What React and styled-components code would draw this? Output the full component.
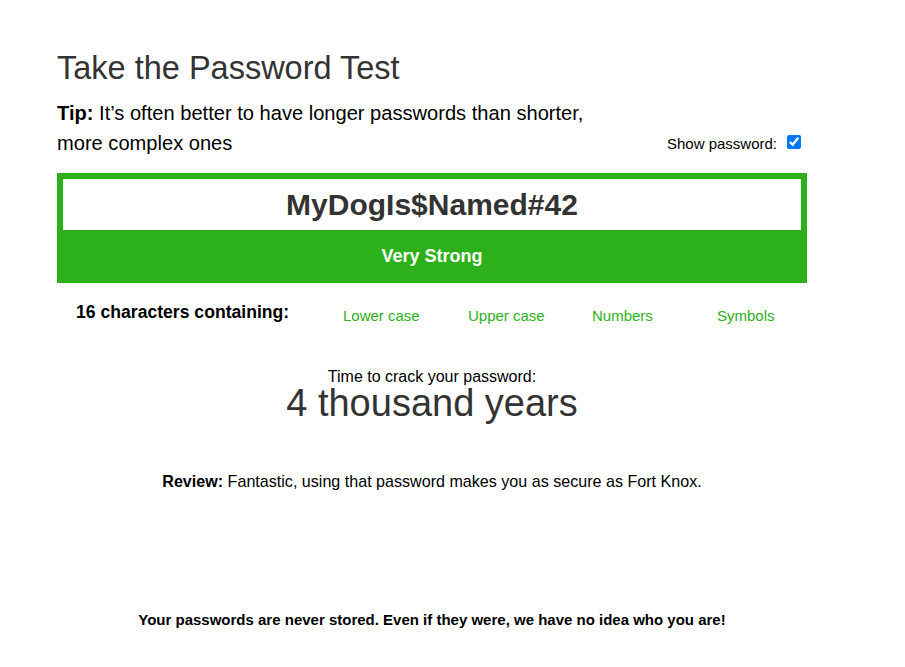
import React, { useState } from 'react';
import styled, { createGlobalStyle } from 'styled-components';

const GREEN = '#2db11b';

const GlobalStyle = createGlobalStyle`
  body {
    margin: 0;
    background: #fff;
    color: #000;
    font-family: "Liberation Sans", Arial, Helvetica, sans-serif;
  }
`;

const Page = styled.main`
  padding: 50px 0 40px 57px;
`;

const Wrapper = styled.div`
  width: 750px;
`;

const Title = styled.h1`
  margin: 0;
  font-size: 32.5px;
  font-weight: 400;
  line-height: 37px;
  color: #333;
`;

const Intro = styled.div`
  display: flex;
  justify-content: space-between;
  align-items: flex-end;
  margin-top: 11px;
`;

const Tip = styled.p`
  margin: 0;
  width: 545px;
  font-size: 20.1px;
  line-height: 30px;

  strong {
    font-weight: bold;
  }
`;

const ShowToggle = styled.label`
  display: flex;
  align-items: center;
  margin-bottom: 6px;
  font-size: 15px;
  line-height: 17px;
  white-space: nowrap;

  input {
    margin: 0 6px 3px 10px;
    width: 14px;
    height: 14px;
  }
`;

const StrengthBox = styled.div`
  margin-top: 15px;
  padding: 6px 6px 0;
  background: ${props => props.$color};
`;

const PasswordInput = styled.input`
  display: block;
  width: 100%;
  height: 51px;
  box-sizing: border-box;
  padding: 0 10px;
  border: 0;
  outline: none;
  background: #fff;
  color: #333;
  caret-color: #333;
  text-align: center;
  font-family: "Liberation Sans", Arial, sans-serif;
  font-size: 30px;
  font-weight: bold;
`;

const StrengthLabel = styled.div`
  height: 53px;
  display: flex;
  align-items: center;
  justify-content: center;
  color: #fff;
  font-size: 18px;
  font-weight: bold;
`;

const Criteria = styled.div`
  display: grid;
  grid-template-columns: 286px 125px 124px 125px 1fr;
  margin-top: 18px;
`;

const CriteriaLabel = styled.div`
  padding-left: 19px;
  font-size: 17.6px;
  font-weight: bold;
  line-height: 22px;
`;

const Criterion = styled.div`
  padding-top: 4px;
  font-size: 15px;
  line-height: 22px;
  color: ${props => props.$met ? GREEN : '#999'};
`;

const Crack = styled.div`
  margin-top: 41px;
  text-align: center;
`;

const CrackCaption = styled.div`
  font-size: 16px;
  line-height: 18px;
`;

const CrackTime = styled.div`
  font-size: 38px;
  line-height: 35px;
  color: #333;
`;

const Review = styled.p`
  margin: 51px 0 0;
  text-align: center;
  font-size: 16.1px;
  line-height: 18px;
`;

const Footer = styled.p`
  margin: 121px 0 0;
  text-align: center;
  font-size: 15px;
  font-weight: bold;
  line-height: 18px;
`;

const criteria = [
  { label: 'Lower case', test: /[a-z]/ },
  { label: 'Upper case', test: /[A-Z]/ },
  { label: 'Numbers', test: /[0-9]/ },
  { label: 'Symbols', test: /[^a-zA-Z0-9]/ },
];

export default function App() {
  const [password, setPassword] = useState('MyDogIs$Named#42');
  const [visible, setVisible] = useState(true);

  return (
    <Page>
      <GlobalStyle />
      <Wrapper>
        <Title>Take the Password Test</Title>
        <Intro>
          <Tip>
            <strong>Tip:</strong> It’s often better to have longer passwords than shorter, more complex ones
          </Tip>
          <ShowToggle>
            Show password:
            <input type="checkbox" checked={visible} onChange={e => setVisible(e.target.checked)} />
          </ShowToggle>
        </Intro>

        <StrengthBox $color={GREEN}>
          <PasswordInput
            autoFocus
            type={visible ? 'text' : 'password'}
            value={password}
            onChange={e => setPassword(e.target.value)}
          />
          <StrengthLabel>Very Strong</StrengthLabel>
        </StrengthBox>

        <Criteria>
          <CriteriaLabel>{password.length} characters containing:</CriteriaLabel>
          {criteria.map(c => (
            <Criterion key={c.label} $met={c.test.test(password)}>{c.label}</Criterion>
          ))}
        </Criteria>

        <Crack>
          <CrackCaption>Time to crack your password:</CrackCaption>
          <CrackTime>4 thousand years</CrackTime>
        </Crack>

        <Review>
          <strong>Review:</strong> Fantastic, using that password makes you as secure as Fort Knox.
        </Review>

        <Footer>Your passwords are never stored. Even if they were, we have no idea who you are!</Footer>
      </Wrapper>
    </Page>
  );
}
